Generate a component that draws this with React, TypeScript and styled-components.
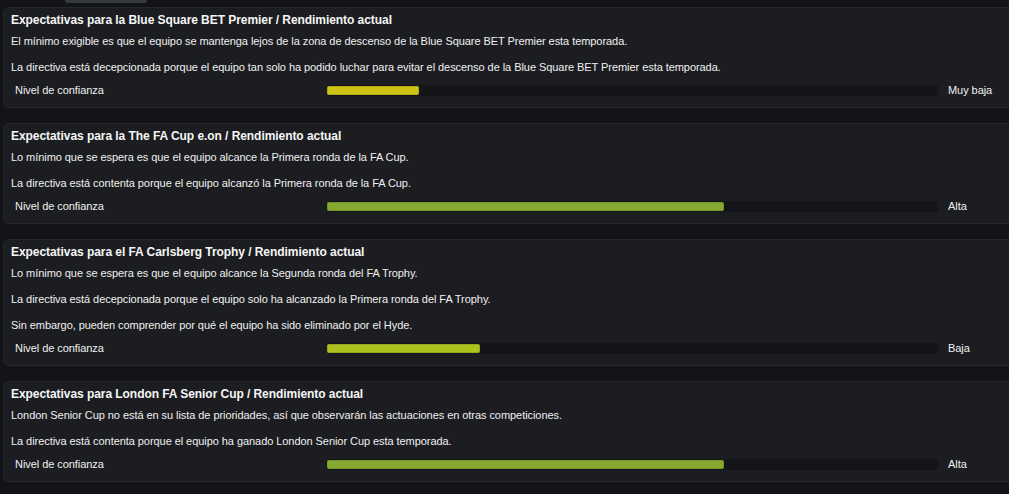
import React from 'react';
import styled, { createGlobalStyle } from 'styled-components';

const GlobalStyle = createGlobalStyle`
  html, body {
    margin: 0;
    padding: 0;
    background: #131417;
  }
  body {
    font-family: "Liberation Sans", Arial, sans-serif;
    color: #ececec;
    overflow: hidden;
  }
`;

const Page = styled.div`
  width: 1009px;
  height: 494px;
  overflow: hidden;
  background: #131417;
`;

const TopTab = styled.div`
  width: 82px;
  height: 3px;
  margin-left: 65px;
  background: #363940;
  border-radius: 0 0 2px 2px;
`;

const List = styled.div`
  display: flex;
  flex-direction: column;
  gap: 15px;
  padding: 4px 0 0 3px;
`;

const Card = styled.section`
  width: 1020px;
  box-sizing: border-box;
  padding: 5px 8px 10px 7px;
  background: #1c1d21;
  border: 1px solid #26272c;
  border-radius: 6px;
  display: flex;
  flex-direction: column;
  letter-spacing: -0.06px;
`;

const Title = styled.h2`
  margin: 0;
  font-size: 12px;
  line-height: 14px;
  font-weight: bold;
  color: #f6f6f6;
`;

const Line = styled.p<{ $first?: boolean }>`
  margin: ${(p) => (p.$first ? '7px' : '12px')} 0 0;
  font-size: 11px;
  line-height: 14px;
  color: #f0f0f0;
`;

const ConfidenceRow = styled.div`
  display: grid;
  grid-template-columns: 302px 611px auto;
  column-gap: 10px;
  align-items: center;
  margin-top: 9px;
  padding-left: 4px;
  font-size: 11px;
  line-height: 14px;
  color: #f0f0f0;
`;

const Track = styled.div`
  height: 11px;
  background: #141518;
  border-radius: 3px;
  display: flex;
  align-items: center;
`;

const Fill = styled.div<{ $color: string }>`
  height: 9px;
  background: ${(p) => p.$color};
  border-radius: 2px;
  box-shadow: inset 0 0 0 1px rgba(0, 0, 0, 0.12);
`;

type Expectation = {
  competition: string;
  lines: string[];
  level: string;
  percent: number;
  color: string;
};

const data: Expectation[] = [
  {
    competition: 'la Blue Square BET Premier',
    lines: [
      'El mínimo exigible es que el equipo se mantenga lejos de la zona de descenso de la Blue Square BET Premier esta temporada.',
      'La directiva está decepcionada porque el equipo tan solo ha podido luchar para evitar el descenso de la Blue Square BET Premier esta temporada.',
    ],
    level: 'Muy baja',
    percent: 15,
    color: '#cdc414',
  },
  {
    competition: 'la The FA Cup e.on',
    lines: [
      'Lo mínimo que se espera es que el equipo alcance la Primera ronda de la FA Cup.',
      'La directiva está contenta porque el equipo alcanzó la Primera ronda de la FA Cup.',
    ],
    level: 'Alta',
    percent: 65,
    color: '#86aa31',
  },
  {
    competition: 'el FA Carlsberg Trophy',
    lines: [
      'Lo mínimo que se espera es que el equipo alcance la Segunda ronda del FA Trophy.',
      'La directiva está decepcionada porque el equipo solo ha alcanzado la Primera ronda del FA Trophy.',
      'Sin embargo, pueden comprender por qué el equipo ha sido eliminado por el Hyde.',
    ],
    level: 'Baja',
    percent: 25,
    color: '#adc11f',
  },
  {
    competition: 'London FA Senior Cup',
    lines: [
      'London Senior Cup no está en su lista de prioridades, así que observarán las actuaciones en otras competiciones.',
      'La directiva está contenta porque el equipo ha ganado London Senior Cup esta temporada.',
    ],
    level: 'Alta',
    percent: 65,
    color: '#86aa31',
  },
];

const ExpectationCard: React.FC<{ item: Expectation }> = ({ item }) => (
  <Card>
    <Title>Expectativas para {item.competition} / Rendimiento actual</Title>
    {item.lines.map((line, i) => (
      <Line key={i} $first={i === 0}>
        {line}
      </Line>
    ))}
    <ConfidenceRow>
      <span>Nivel de confianza</span>
      <Track>
        <Fill $color={item.color} style={{ width: `${item.percent}%` }} />
      </Track>
      <span>{item.level}</span>
    </ConfidenceRow>
  </Card>
);

export default function App() {
  return (
    <Page>
      <GlobalStyle />
      <TopTab />
      <List>
        {data.map((item) => (
          <ExpectationCard key={item.competition} item={item} />
        ))}
      </List>
    </Page>
  );
}
